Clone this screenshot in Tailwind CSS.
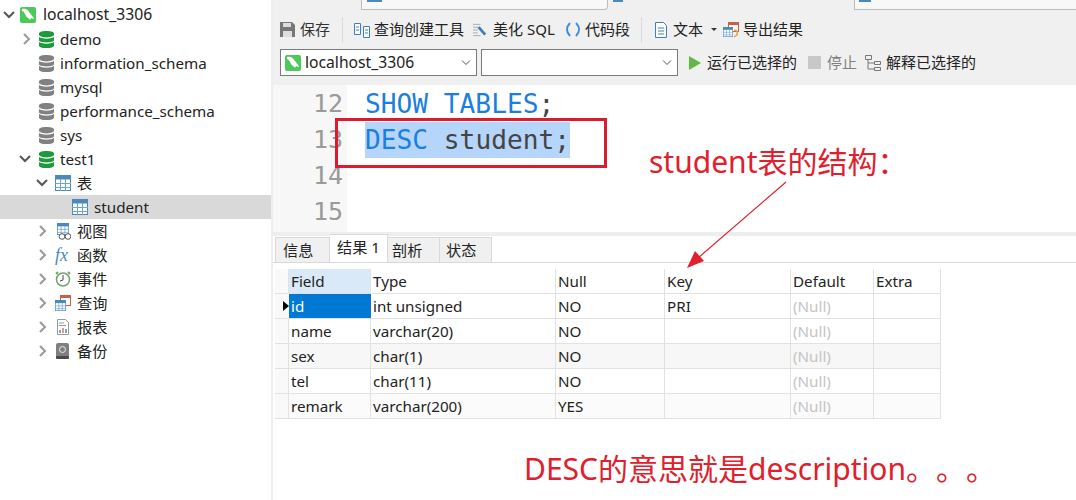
<!DOCTYPE html>
<html lang="en">
<head>
    <meta charset="UTF-8">
    <title>Navicat - localhost_3306</title>
    <script src="https://cdn.jsdelivr.net/npm/@tailwindcss/browser@4"></script>
</head>
<body class="bg-white text-[#222] text-[15.2px] font-['Noto_Sans','Noto_Sans_CJK_SC',sans-serif]">
    <svg class="hidden">
        <symbol id="db" viewBox="0 0 15 20" preserveAspectRatio="none">
            <path fill="currentColor" d="M0 3c0-2 3-3 7.500-3S15 1 15 3v1.500c0 1.500-3 3-7.500 3S0 6 0 4.500zM0 7c2 1.500 4.500 2 7.500 2s5.500-.5 7.500-2v4c0 1.500-3 2.500-7.500 2.500S0 12.500 0 11zM0 13c2 1.500 4.500 2 7.500 2s5.500-.5 7.500-2v4c0 2-3 3-7.500 3S0 19 0 17z"/>
        </symbol>
        <symbol id="dolphin" viewBox="0 0 16 16">
            <rect width="16" height="16" rx="2" fill="#4cc95a"/>
            <path fill="#fff" d="M2 2c4-1 6 1 8 4 1 2 3 3 4 6-2 0-2-1-3-1l-1 2c-1-2-3-2-4-4L4 5 2 4z"/>
        </symbol>
        <symbol id="tbl" viewBox="0 0 16 16">
            <rect x=".5" y=".5" width="15" height="15" fill="#fff" stroke="#4a89c0"/>
            <rect width="16" height="4.500" fill="#4a89c0"/>
            <path stroke="#6fa3d2" d="M5.500 4v12M10.500 4v12M0 8.500h16M0 12.500h16"/>
        </symbol>
        <symbol id="chev-r" viewBox="0 0 10 12"><path fill="none" stroke="#999" stroke-width="2" d="M2 1l5 5-5 5"/></symbol>
        <symbol id="chev-d" viewBox="0 0 12 10"><path fill="none" stroke="#555" stroke-width="2" d="M1 2l5 5 5-5"/></symbol>
    </svg>

    <div class="relative flex h-[500px] w-[1076px] overflow-hidden">
        <!-- Connection tree -->
        <aside class="flex w-[271px] shrink-0 flex-col pt-[3px]">
            <div class="flex h-6 items-center pl-[3px]">
                <svg class="h-[10px] w-3"><use href="#chev-d"/></svg>
                <svg class="ml-[5px] h-4 w-4"><use href="#dolphin"/></svg>
                <span class="ml-[7px] text-[15.700px]">localhost_3306</span>
            </div>
            <div class="flex h-6 items-center pl-[22px]">
                <svg class="h-3 w-[10px]"><use href="#chev-r"/></svg>
                <svg class="ml-[7px] h-[17px] w-[15px] text-[#1d9a3c]"><use href="#db"/></svg>
                <span class="ml-[6px]">demo</span>
            </div>
            <div class="flex h-6 items-center pl-[39px]">
                <svg class="h-[17px] w-[15px] text-[#808080]"><use href="#db"/></svg>
                <span class="ml-[6px]">information_schema</span>
            </div>
            <div class="flex h-6 items-center pl-[39px]">
                <svg class="h-[17px] w-[15px] text-[#808080]"><use href="#db"/></svg>
                <span class="ml-[6px]">mysql</span>
            </div>
            <div class="flex h-6 items-center pl-[39px]">
                <svg class="h-[17px] w-[15px] text-[#808080]"><use href="#db"/></svg>
                <span class="ml-[6px]">performance_schema</span>
            </div>
            <div class="flex h-6 items-center pl-[39px]">
                <svg class="h-[17px] w-[15px] text-[#808080]"><use href="#db"/></svg>
                <span class="ml-[6px]">sys</span>
            </div>
            <div class="flex h-6 items-center pl-[19px]">
                <svg class="h-[10px] w-3"><use href="#chev-d"/></svg>
                <svg class="ml-2 h-[17px] w-[15px] text-[#1d9a3c]"><use href="#db"/></svg>
                <span class="ml-[6px]">test1</span>
            </div>
            <div class="flex h-6 items-center pl-[36px]">
                <svg class="h-[10px] w-3"><use href="#chev-d"/></svg>
                <svg class="ml-[7px] h-4 w-4"><use href="#tbl"/></svg>
                <span class="ml-[6px]">表</span>
            </div>
            <div class="flex h-6 items-center bg-[#d9d9d9] pl-[72px]">
                <svg class="h-4 w-4"><use href="#tbl"/></svg>
                <span class="ml-[6px]">student</span>
            </div>
            <div class="flex h-6 items-center pl-[38px]">
                <svg class="h-3 w-[10px]"><use href="#chev-r"/></svg>
                <svg class="ml-[7px] h-[17px] w-4" viewBox="0 0 16 17"><use href="#tbl" width="16" height="12"/><circle cx="7" cy="13.500" r="2.800" fill="#fff" stroke="#555"/><circle cx="13" cy="13.500" r="2.800" fill="#fff" stroke="#555"/></svg>
                <span class="ml-[6px]">视图</span>
            </div>
            <div class="flex h-6 items-center pl-[38px]">
                <svg class="h-3 w-[10px]"><use href="#chev-r"/></svg>
                <span class="ml-[7px] w-4 font-['Liberation_Serif',serif] text-[18px] italic leading-none text-[#4a89c0]">fx</span>
                <span class="ml-[6px]">函数</span>
            </div>
            <div class="flex h-6 items-center pl-[38px]">
                <svg class="h-3 w-[10px]"><use href="#chev-r"/></svg>
                <svg class="ml-[7px] h-4 w-4" viewBox="0 0 16 16"><circle cx="8" cy="8.500" r="6.500" fill="#fff" stroke="#6ea56a" stroke-width="1.500"/><path fill="none" stroke="#444" d="M8 4v5l-3 1"/><path stroke="#6ea56a" stroke-width="2" d="M1 3l2-2M15 3l-2-2"/></svg>
                <span class="ml-[6px]">事件</span>
            </div>
            <div class="flex h-6 items-center pl-[38px]">
                <svg class="h-3 w-[10px]"><use href="#chev-r"/></svg>
                <svg class="ml-[7px] h-4 w-4" viewBox="0 0 16 16"><rect x="5.500" y=".5" width="10" height="10" fill="#fff" stroke="#c8604a"/><rect x="5" width="11" height="3" fill="#c8604a"/><use href="#tbl" y="5" width="11" height="11"/></svg>
                <span class="ml-[6px]">查询</span>
            </div>
            <div class="flex h-6 items-center pl-[38px]">
                <svg class="h-3 w-[10px]"><use href="#chev-r"/></svg>
                <svg class="ml-[7px] h-4 w-4" viewBox="0 0 16 16"><path fill="#fff" stroke="#999" d="M2.500.5h8l3 3v12h-11z"/><path stroke="#999" d="M4 4h5M4 6.500h7"/><path stroke="#4a89c0" stroke-width="1.500" d="M5 14v-3"/><path stroke="#d08050" stroke-width="1.500" d="M8 14V9"/><path stroke="#4a89c0" stroke-width="1.500" d="M11 14v-4"/></svg>
                <span class="ml-[6px]">报表</span>
            </div>
            <div class="flex h-6 items-center pl-[38px]">
                <svg class="h-3 w-[10px]"><use href="#chev-r"/></svg>
                <svg class="ml-[7px] h-4 w-4" viewBox="0 0 16 16"><rect x="1" width="13" height="16" rx="2" fill="#7f7f7f"/><rect x="1" y="13" width="13" height="3" rx="1" fill="#4a4a4a"/><circle cx="7.500" cy="6.500" r="3" fill="none" stroke="#eee"/></svg>
                <span class="ml-[6px]">备份</span>
            </div>
        </aside>
        <div class="w-[2px] shrink-0 bg-[#eeeeee]"></div>

        <main class="flex min-w-0 flex-1 flex-col">
            <!-- Tab strip, clipped at the top -->
            <div class="flex h-[10px] shrink-0 bg-[#f0f0f0]">
                <div class="w-[88px]"></div>
                <div class="w-[247px] rounded-br-sm border-r border-b border-l border-[#bdbdbd] bg-[#f8f8f8] pl-[5px]"><div class="h-[2px] w-[15px] bg-[#4a89c0]"></div></div>
                <div class="w-[246px] pl-[5px]"><div class="h-[2px] w-[10px] bg-[#4a89c0]"></div></div>
                <div class="flex-1 border-b border-l border-[#bdbdbd] bg-[#f8f8f8] pl-[4px]"><div class="h-[2px] w-[12px] bg-[#4a89c0]"></div></div>
            </div>

            <!-- Toolbar -->
            <div class="flex h-[75px] shrink-0 flex-col bg-[#f0f0f0] text-[15px]">
                <div class="flex h-[39px] items-center pl-[7px]">
                    <svg class="h-[15px] w-[15px]" viewBox="0 0 15 15"><path fill="#777" d="M0 0h12l3 3v12H0z"/><rect x="3" y="1" width="8" height="4" fill="#ddd"/><rect x="3" y="9" width="9" height="6" fill="#ddd"/></svg>
                    <span class="ml-[5px] text-[#333]">保存</span>
                    <div class="ml-[12px] h-[26px] w-px bg-[#dcdcdc]"></div>
                    <svg class="ml-[11px] h-4 w-4" viewBox="0 0 16 16"><path fill="#fff" stroke="#3c7fc0" d="M.5 1.500h6v11h-6zM9.500 4.500h6v11h-6z"/><path stroke="#3c7fc0" d="M2 5h3M2 8h3M11 8h3M11 11h3"/></svg>
                    <span class="ml-[4px]">查询创建工具</span>
                    <svg class="ml-[9px] h-4 w-[15px]" viewBox="0 0 16 16"><path stroke="#aaa" d="M0 2h8M0 5h6M0 8h5M0 11h5M0 14h8"/><path stroke="#3c7fc0" stroke-width="3" d="M6 5l7 8"/></svg>
                    <span class="ml-[5px] w-[63px] whitespace-nowrap">美化 SQL</span>
                    <svg class="ml-[10px] h-[15px] w-[14px]" viewBox="0 0 14 15"><path fill="none" stroke="#3c8ee0" stroke-width="2" d="M4 1C0 5 0 10 4 14M10 1c4 4 4 9 0 13"/></svg>
                    <span class="ml-[5px]">代码段</span>
                    <div class="ml-[11px] h-[26px] w-px bg-[#dcdcdc]"></div>
                    <svg class="ml-[12px] h-4 w-[14px]" viewBox="0 0 14 16"><path fill="#fff" stroke="#3c7fc0" d="M1.500.5h8l3 3v12h-11z"/><path stroke="#3c7fc0" d="M4 6h6M4 9h6M4 12h6"/></svg>
                    <span class="ml-[5px]">文本</span>
                    <span class="ml-[8px] h-0 w-0 border-x-[3px] border-t-[3px] border-x-transparent border-t-[#333]"></span>
                    <svg class="ml-[6px] h-4 w-4" viewBox="0 0 16 16"><rect x="5.500" y=".5" width="10" height="9" fill="#fff" stroke="#c8604a"/><rect x="5" width="11" height="3" fill="#c8604a"/><use href="#tbl" y="5" width="10" height="10"/><path fill="none" stroke="#e8a030" stroke-width="1.500" d="M11 8c3 0 4 2 3 5l-3 2"/></svg>
                    <span class="ml-[4px]">导出结果</span>
                </div>
                <div class="flex h-[27px] items-center pl-[7px]">
                    <div class="flex h-[27px] w-[197px] items-center border border-[#7a7a7a] bg-white pl-[4px]">
                        <svg class="h-4 w-4"><use href="#dolphin"/></svg>
                        <span class="ml-[4px] text-[15.700px]">localhost_3306</span>
                        <svg class="ml-auto mr-[5px] h-2 w-[10px]" viewBox="0 0 10 8"><path fill="none" stroke="#555" d="M1 1.500l4 4 4-4"/></svg>
                    </div>
                    <div class="ml-[4px] flex h-[27px] w-[197px] items-center border border-[#7a7a7a] bg-white">
                        <svg class="ml-auto mr-[5px] h-2 w-[10px]" viewBox="0 0 10 8"><path fill="none" stroke="#555" d="M1 1.500l4 4 4-4"/></svg>
                    </div>
                    <svg class="ml-[11px] h-[14px] w-3" viewBox="0 0 12 14"><path fill="#62b946" d="M0 0l12 7-12 7z"/></svg>
                    <span class="ml-[6px]">运行已选择的</span>
                    <span class="ml-[11px] h-[13px] w-[13px] bg-[#c8c8c8]"></span>
                    <span class="ml-[6px] text-[#808080]">停止</span>
                    <svg class="ml-[8px] h-4 w-4" viewBox="0 0 16 16"><path fill="none" stroke="#777" d="M.5.5h6v4h-6zM9.500 6.500h6v3h-6zM9.500 12.500h6v3h-6zM3 5v9h6M3 8h6"/></svg>
                    <span class="ml-[5px]">解释已选择的</span>
                </div>
            </div>

            <!-- SQL editor -->
            <div class="flex h-[147px] shrink-0 font-['DejaVu_Sans_Mono',monospace] text-[26.200px] leading-[36px]">
                <div class="w-[74px] shrink-0 bg-[#f7f7f7] pl-[40px] pt-[1px] text-[25px] text-[#9a9a9a]">
                    <div class="h-9">12</div>
                    <div class="h-9">13</div>
                    <div class="h-9">14</div>
                    <div class="h-9">15</div>
                </div>
                <div class="pl-[18px] pt-[1px] text-[#444]">
                    <div class="h-9"><span class="text-[#1a7fe0]">SHOW TABLES</span>;</div>
                    <div class="h-9"><span class="inline-block h-9 bg-[#b5d5fb]"><span class="text-[#1a7fe0]">DESC</span> student;</span></div>
                </div>
            </div>
            <div class="h-[4px] shrink-0 bg-[#eeeeee]"></div>

            <!-- Result tabs -->
            <div class="flex h-[27px] shrink-0 items-end border-b border-[#d9d9d9] pl-[2px]">
                <div class="flex h-[25px] w-[55px] items-center border border-b-0 border-[#d9d9d9] bg-[#f0f0f0] pl-[7px]">信息</div>
                <div class="flex h-[28px] w-[58px] items-center border border-l-0 border-b-0 border-[#d9d9d9] bg-white pl-[7px] pb-[2px]">结果 1</div>
                <div class="flex h-[25px] w-[52px] items-center border-t border-r border-[#d9d9d9] bg-[#f0f0f0] pl-[4px]">剖析</div>
                <div class="flex h-[25px] w-[52px] items-center border-t border-r border-[#d9d9d9] bg-[#f0f0f0] pl-[6px]">状态</div>
            </div>

            <!-- Result grid -->
            <div class="ml-[2px] mt-[6px] w-[666px]">
                <div class="flex h-[25px] border-b border-[#e2e2e2] leading-[24px]">
                    <div class="w-[14px] border-r border-[#e2e2e2] bg-[#f9f9f9]"></div>
                    <div class="w-[82px] border-r border-[#e2e2e2] bg-[#d9e9f8] pl-[2px]">Field</div>
                    <div class="w-[185px] border-r border-[#e2e2e2] pl-[2px]">Type</div>
                    <div class="w-[109px] border-r border-[#e2e2e2] pl-[2px]">Null</div>
                    <div class="w-[126px] border-r border-[#e2e2e2] pl-[2px]">Key</div>
                    <div class="w-[83px] border-r border-[#e2e2e2] pl-[2px]">Default</div>
                    <div class="w-[67px] border-r border-[#e2e2e2] pl-[2px]">Extra</div>
                </div>
                <div class="flex h-[25px] border-b border-[#e2e2e2] leading-[24px]">
                    <div class="flex w-[14px] items-center justify-end bg-[#f9f9f9]"><span class="h-0 w-0 border-y-[5px] border-l-[6px] border-y-transparent border-l-black"></span></div>
                    <div class="w-[82px] bg-[#0078d4] pl-[2px] text-white">id</div>
                    <div class="w-[185px] border-r border-[#e2e2e2] pl-[2px]">int unsigned</div>
                    <div class="w-[109px] border-r border-[#e2e2e2] pl-[2px]">NO</div>
                    <div class="w-[126px] border-r border-[#e2e2e2] pl-[2px]">PRI</div>
                    <div class="w-[83px] border-r border-[#e2e2e2] pl-[2px] text-[#c4c4c4]">(Null)</div>
                    <div class="w-[67px] border-r border-[#e2e2e2]"></div>
                </div>
                <div class="flex h-[25px] border-b border-[#e2e2e2] leading-[24px]">
                    <div class="w-[14px] border-r border-[#e2e2e2] bg-[#f9f9f9]"></div>
                    <div class="w-[82px] border-r border-[#e2e2e2] pl-[2px]">name</div>
                    <div class="w-[185px] border-r border-[#e2e2e2] pl-[2px]">varchar(20)</div>
                    <div class="w-[109px] border-r border-[#e2e2e2] pl-[2px]">NO</div>
                    <div class="w-[126px] border-r border-[#e2e2e2]"></div>
                    <div class="w-[83px] border-r border-[#e2e2e2] pl-[2px] text-[#c4c4c4]">(Null)</div>
                    <div class="w-[67px] border-r border-[#e2e2e2]"></div>
                </div>
                <div class="flex h-[25px] border-b border-[#e2e2e2] bg-[#f7f7f7] leading-[24px]">
                    <div class="w-[14px] border-r border-[#e2e2e2] bg-[#f9f9f9]"></div>
                    <div class="w-[82px] border-r border-[#e2e2e2] pl-[2px]">sex</div>
                    <div class="w-[185px] border-r border-[#e2e2e2] pl-[2px]">char(1)</div>
                    <div class="w-[109px] border-r border-[#e2e2e2] pl-[2px]">NO</div>
                    <div class="w-[126px] border-r border-[#e2e2e2]"></div>
                    <div class="w-[83px] border-r border-[#e2e2e2] pl-[2px] text-[#c4c4c4]">(Null)</div>
                    <div class="w-[67px] border-r border-[#e2e2e2]"></div>
                </div>
                <div class="flex h-[25px] border-b border-[#e2e2e2] leading-[24px]">
                    <div class="w-[14px] border-r border-[#e2e2e2] bg-[#f9f9f9]"></div>
                    <div class="w-[82px] border-r border-[#e2e2e2] pl-[2px]">tel</div>
                    <div class="w-[185px] border-r border-[#e2e2e2] pl-[2px]">char(11)</div>
                    <div class="w-[109px] border-r border-[#e2e2e2] pl-[2px]">NO</div>
                    <div class="w-[126px] border-r border-[#e2e2e2]"></div>
                    <div class="w-[83px] border-r border-[#e2e2e2] pl-[2px] text-[#c4c4c4]">(Null)</div>
                    <div class="w-[67px] border-r border-[#e2e2e2]"></div>
                </div>
                <div class="flex h-[25px] border-b border-[#e2e2e2] bg-[#fbfbfb] leading-[24px]">
                    <div class="w-[14px] border-r border-[#e2e2e2] bg-[#f9f9f9]"></div>
                    <div class="w-[82px] border-r border-[#e2e2e2] pl-[2px]">remark</div>
                    <div class="w-[185px] border-r border-[#e2e2e2] pl-[2px]">varchar(200)</div>
                    <div class="w-[109px] border-r border-[#e2e2e2] pl-[2px]">YES</div>
                    <div class="w-[126px] border-r border-[#e2e2e2]"></div>
                    <div class="w-[83px] border-r border-[#e2e2e2] pl-[2px] text-[#c4c4c4]">(Null)</div>
                    <div class="w-[67px] border-r border-[#e2e2e2]"></div>
                </div>
            </div>
        </main>

        <!-- Red annotations drawn over the screenshot -->
        <div class="absolute left-[335px] top-[118px] h-[50px] w-[272px] border-[3px] border-[#dc1c2e]"></div>
        <div class="absolute left-[649px] top-[141px] whitespace-nowrap text-[30px] leading-[42px] text-[#e0202c]">student表的结构：</div>
        <svg class="absolute left-[680px] top-[178px] h-[95px] w-[112px]" viewBox="0 0 112 95">
            <path stroke="#e0202c" stroke-width="1.200" d="M106 4L18 80"/>
            <path fill="#e0202c" d="M7 90l8-17 9 10z"/>
        </svg>
        <div class="absolute left-[524px] top-[449px] whitespace-nowrap text-[30px] leading-[40px] text-[#e0202c] [text-spacing-trim:space-all]">DESC的意思就是description。。。</div>
    </div>
</body>
</html>
